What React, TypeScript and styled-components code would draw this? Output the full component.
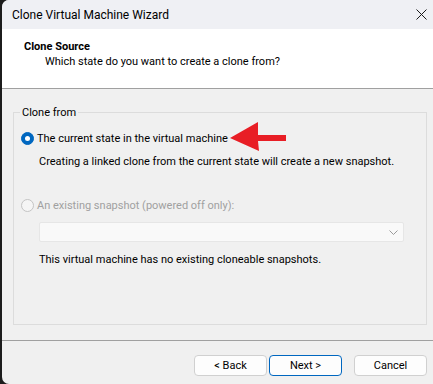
import styled, { createGlobalStyle } from "styled-components";

const GlobalStyle = createGlobalStyle`
  html, body {
    margin: 0;
    padding: 0;
    background: #1c1c1c;
  }
  body {
    font-family: Roboto, "Liberation Sans", sans-serif;
    font-size: 11px;
    color: #000;
  }
`;

const Window = styled.div`
  position: relative;
  margin-left: 2px;
  width: 431px;
  height: 384px;
  display: flex;
  flex-direction: column;
  background: #f0f0f0;
  border-radius: 7px 0 0 7px;
  overflow: hidden;
`;

const TitleBar = styled.div`
  flex: none;
  height: 29px;
  display: flex;
  align-items: center;
  justify-content: space-between;
  padding: 0 6px 0 10px;
  background: #eff0f4;
  font-size: 12px;
`;

const Header = styled.div`
  flex: none;
  height: 49px;
  padding: 10px 0 0 22px;
  background: #fff;
  border-bottom: 1px solid #a0a0a0;
`;

const HeaderTitle = styled.div`
  font-weight: 700;
  line-height: 15px;
`;

const HeaderSub = styled.div`
  line-height: 15px;
  margin-left: 21px;
`;

const Body = styled.div`
  flex: 1;
  display: flex;
  flex-direction: column;
  padding: 23px 6px 15px 11px;
`;

const GroupBox = styled.div`
  position: relative;
  flex: 1;
  border: 1px solid #dcdcdc;
  padding: 17px 0 0 7px;
`;

const Legend = styled.span`
  position: absolute;
  top: -8px;
  left: 6px;
  padding: 0 2px;
  line-height: 15px;
  background: #f0f0f0;
`;

const RadioRow = styled.label<{ $disabled?: boolean; $top?: number }>`
  display: flex;
  align-items: center;
  gap: 3px;
  height: 16px;
  margin-top: ${(p) => p.$top ?? 0}px;
  color: ${(p) => (p.$disabled ? "#a0a0a0" : "#000")};
`;

const RadioDot = styled.span<{ $checked?: boolean }>`
  box-sizing: border-box;
  width: 13px;
  height: 13px;
  border-radius: 50%;
  flex: none;
  display: flex;
  align-items: center;
  justify-content: center;
  background: ${(p) => (p.$checked ? "#0067c0" : "#f5f5f5")};
  border: 1px solid ${(p) => (p.$checked ? "#0067c0" : "#c4c4c4")};
  &::after {
    content: "";
    display: ${(p) => (p.$checked ? "block" : "none")};
    width: 5px;
    height: 5px;
    border-radius: 50%;
    background: #fff;
  }
`;

const Note = styled.div<{ $top: number }>`
  margin: ${(p) => p.$top}px 0 0 18px;
  line-height: 15px;
  white-space: nowrap;
`;

const Combo = styled.div`
  box-sizing: border-box;
  margin: 9px 0 0 18px;
  width: 365px;
  height: 20px;
  display: flex;
  align-items: center;
  justify-content: flex-end;
  padding-right: 5px;
  background: #f9f9f9;
  border: 1px solid #e6e6e6;
  border-radius: 2px;
`;

const Footer = styled.div`
  flex: none;
  height: 44px;
  box-sizing: border-box;
  border-top: 1px solid #a0a0a0;
  display: flex;
  justify-content: flex-end;
  align-items: flex-start;
  padding: 14px 6px 0 0;
`;

const Button = styled.button<{ $primary?: boolean; $gap?: number }>`
  box-sizing: border-box;
  width: 73px;
  height: 21px;
  margin-left: ${(p) => p.$gap ?? 0}px;
  padding: 0;
  font: inherit;
  line-height: 19px;
  color: #000;
  background: #fdfdfd;
  border: 1px solid ${(p) => (p.$primary ? "#0067c0" : "#d0d0d0")};
  border-radius: 4px;
`;

const Arrow = styled.svg`
  position: absolute;
  left: 226px;
  top: 120px;
`;

const CloseIcon = () => (
  <svg width="11" height="11" viewBox="0 0 11 11">
    <path d="M0.5 0.5 L10.5 10.5 M10.5 0.5 L0.5 10.5" stroke="#1a1a1a" strokeWidth="1" />
  </svg>
);

const Chevron = () => (
  <svg width="9" height="5" viewBox="0 0 9 5">
    <path d="M0.5 0.5 L4.5 4.5 L8.5 0.5" stroke="#9a9a9a" strokeWidth="1" fill="none" />
  </svg>
);

export default function App() {
  return (
    <>
      <GlobalStyle />
      <Window>
        <TitleBar>
          <span>Clone Virtual Machine Wizard</span>
          <CloseIcon />
        </TitleBar>
        <Header>
          <HeaderTitle>Clone Source</HeaderTitle>
          <HeaderSub>Which state do you want to create a clone from?</HeaderSub>
        </Header>
        <Body>
          <GroupBox>
            <Legend>Clone from</Legend>
            <RadioRow>
              <RadioDot $checked />
              The current state in the virtual machine
            </RadioRow>
            <Note $top={8}>
              Creating a linked clone from the current state will create a new snapshot.
            </Note>
            <RadioRow $disabled $top={28}>
              <RadioDot />
              An existing snapshot (powered off only):
            </RadioRow>
            <Combo>
              <Chevron />
            </Combo>
            <Note $top={10}>This virtual machine has no existing cloneable snapshots.</Note>
          </GroupBox>
        </Body>
        <Footer>
          <Button>&lt; Back</Button>
          <Button $primary $gap={2}>Next &gt;</Button>
          <Button $gap={12}>Cancel</Button>
        </Footer>
        <Arrow width="62" height="34" viewBox="0 0 62 34">
          <polygon
            points="2,18 30,2 30,15 58,15 58,21 30,21 31,31"
            fill="#e81e25"
          />
        </Arrow>
      </Window>
    </>
  );
}
